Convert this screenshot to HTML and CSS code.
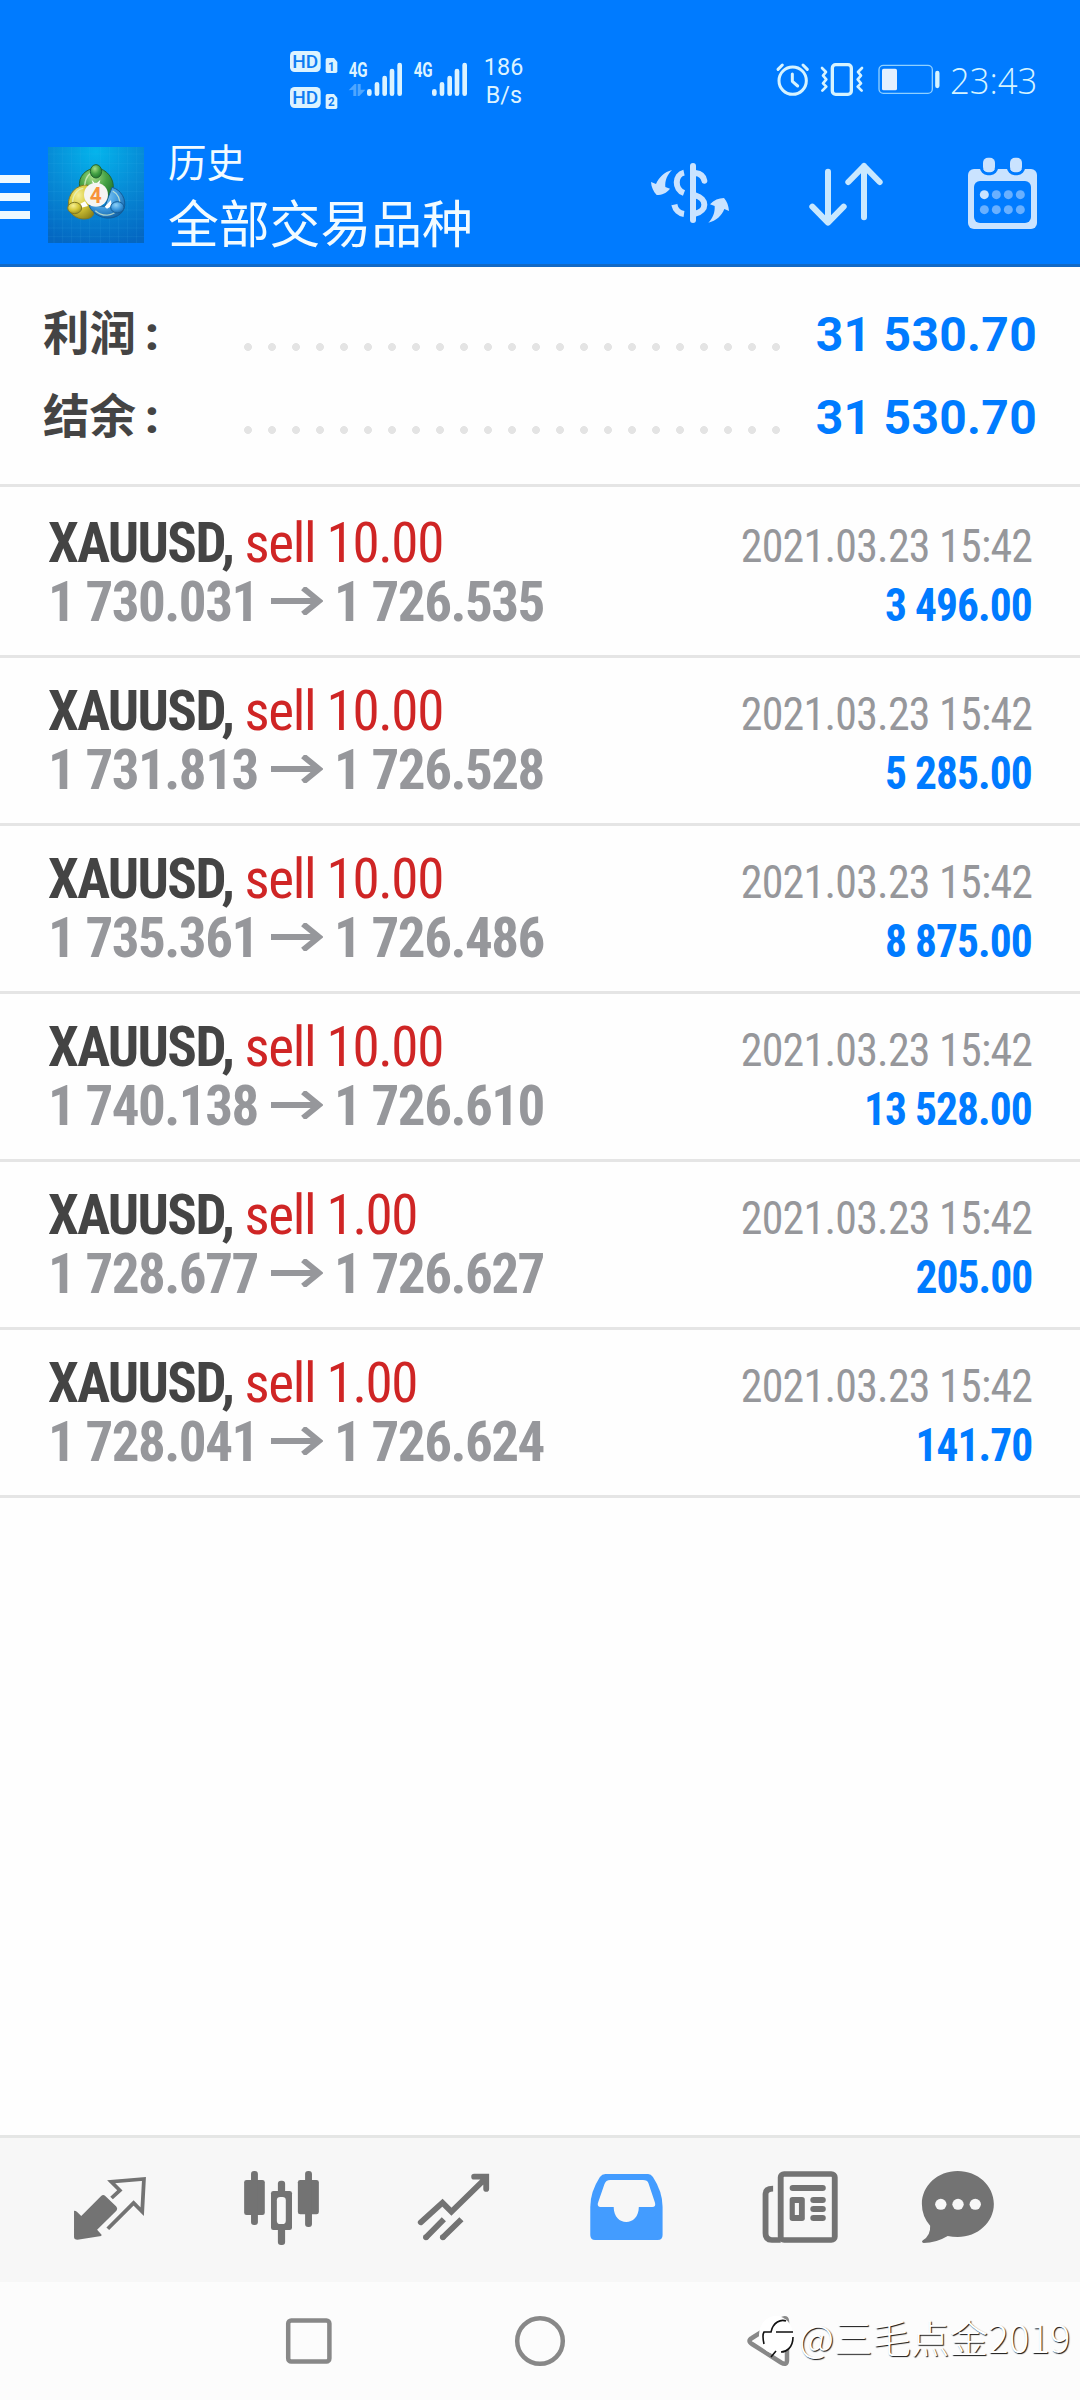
FILE: index.html
```html
<!DOCTYPE html>
<html lang="zh-CN">
<head>
<meta charset="utf-8">
<title>历史</title>
<link rel="stylesheet" href="styles.css">
</head>
<body>
<div class="screen">
  <header class="header">
    <div class="status">
      <svg class="status-left" viewBox="0 0 840 300">
        <g fill="#dcf3ff">
          <rect x="60" y="63" width="92" height="63" rx="14"/>
          <rect x="60" y="171" width="92" height="63" rx="14"/>
          <path d="M172 84h20l10 12v28q0 5-5 5h-25q-5 0-5-5v-35q0-5 5-5z"/>
          <path d="M172 192h20l10 12v28q0 5-5 5h-25q-5 0-5-5v-35q0-5 5-5z"/>
        </g>
        <g fill="#0d7cf2" class="hd-text">
          <text x="67" y="115" font-size="56" textLength="78" lengthAdjust="spacingAndGlyphs">HD</text>
          <text x="67" y="223" font-size="56" textLength="78" lengthAdjust="spacingAndGlyphs">HD</text>
          <text x="174" y="122" font-size="40" textLength="20" lengthAdjust="spacingAndGlyphs" font-weight="bold">1</text>
          <text x="174" y="229" font-size="38" textLength="20" lengthAdjust="spacingAndGlyphs" font-weight="bold">2</text>
        </g>
        <g fill="#dcf3ff" class="net-text">
          <text x="236" y="142" font-size="58" textLength="57" lengthAdjust="spacingAndGlyphs">4G</text>
          <text x="431" y="142" font-size="58" textLength="57" lengthAdjust="spacingAndGlyphs">4G</text>
        </g>
        <path fill="#4ea6ff" d="M236 181l18-19h5v36h-9v-19zM263 162h9v17h14l-18 19h-5z"/>
        <g stroke="#dcf3ff" stroke-width="14" stroke-linecap="round">
          <path d="M298 184v7M321 163v28M344 144v47M366 123v68M389 105v86M493 184v7M516 163v28M539 144v47M561 123v68M584 105v86"/>
        </g>
        <g fill="#dcf3ff" class="speed-text">
          <text x="641" y="135" textLength="119">186</text>
          <text x="647" y="219" textLength="109">B/s</text>
        </g>
      </svg>
      <svg class="status-right" viewBox="0 0 960 240">
        <g fill="none" stroke="#d6f3ff" stroke-linecap="round" stroke-linejoin="round">
          <circle cx="98" cy="122" r="41" stroke-width="9"/>
          <path d="M97 102v22l16 14M54 88l13-13M129 75l13 13" stroke-width="9"/>
          <rect x="217" y="74" width="57" height="89" rx="10" stroke-width="10"/>
          <path d="M186 84l12 12-9 11 10 11-10 12 10 10-12 12M306 84l-12 12 9 11-10 11 10 12-10 10 12 12" stroke-width="8"/>
          <rect x="357" y="76" width="160" height="84" rx="13" stroke-width="4" stroke="#8fd0ff"/>
          <path d="M532 99v39" stroke-width="13"/>
        </g>
        <rect x="366" y="86" width="45" height="65" rx="5" fill="#e4f0ff"/>
        <text class="clock" x="570" y="162" textLength="262" lengthAdjust="spacingAndGlyphs">23:43</text>
      </svg>
    </div>
    <div class="toolbar">
      <div class="menu"><i></i><i></i><i></i></div>
      <svg class="logo" viewBox="24 21 288 288">
        <defs>
          <radialGradient id="bg" cx=".5" cy=".05" r="1"><stop offset="0" stop-color="#04b4ec"/><stop offset=".5" stop-color="#078bd6"/><stop offset="1" stop-color="#0467c2"/></radialGradient>
          <radialGradient id="gr" cx=".4" cy=".3" r=".8"><stop offset="0" stop-color="#a5dc85"/><stop offset=".5" stop-color="#45a245"/><stop offset="1" stop-color="#176b28"/></radialGradient>
          <radialGradient id="ye" cx=".4" cy=".3" r=".8"><stop offset="0" stop-color="#f5ef94"/><stop offset=".5" stop-color="#d6c737"/><stop offset="1" stop-color="#8a8119"/></radialGradient>
          <radialGradient id="bl" cx=".4" cy=".3" r=".8"><stop offset="0" stop-color="#8fd2f8"/><stop offset=".5" stop-color="#3f9ade"/><stop offset="1" stop-color="#0b5a9f"/></radialGradient>
        </defs>
        <path fill="url(#bg)" d="M24 21h288v288H24z"/>
        <path d="M42 21v288M68 21v288M95 21v288M122 21v288M149 21v288M181 21v288M208 21v288M235 21v288M262 21v288M289 21v288M24 42h288M24 70h288M24 98h288M24 126h288M24 154h288M24 182h288M24 210h288M24 237h288M24 264h288M24 290h288" stroke="#4cb8f0" stroke-opacity=".18" stroke-width="2"/>
        <path fill="url(#gr)" stroke="#24652f" stroke-width="3" d="M119 142C113 108 139 86 168 84c32 2 57 33 51 65-3 15-12 27-20 30l-36-40z"/>
        <path fill="url(#ye)" stroke="#817a26" stroke-width="3" d="M143 135c-34-2-60 27-58 62 1 28 34 48 64 37 22-8 8-35 8-35z"/>
        <path fill="url(#bl)" stroke="#135d98" stroke-width="3" d="M216 142c28 7 45 38 36 64-10 26-45 35-72 23-18-8-30-23-33-33l48 3z"/>
        <path d="M134 136c2-27 17-38 28-40M98 190c-1-24 14-43 32-45M166 212c23 21 52 15 64 0M218 153c16 8 24 26 20 42" fill="none" stroke="#e4f6d0" stroke-opacity=".7" stroke-width="4"/>
        <path d="M155 119l12 14 14-14-4 16h-17zM121 191l14-7 9 14-20 5zM194 200l19-20 2 18-14 8z" fill="#fff"/>
        <ellipse cx="168" cy="94" rx="17" ry="20" fill="url(#gr)" stroke="#24652f" stroke-width="3"/>
        <ellipse cx="104" cy="204" rx="21" ry="17" fill="url(#ye)" stroke="#817a26" stroke-width="3"/>
        <ellipse cx="232" cy="202" rx="20" ry="17" fill="url(#bl)" stroke="#135d98" stroke-width="3"/>
        <circle cx="168" cy="164" r="36" fill="#f5f5f3"/>
        <text x="149" y="188" class="logo-number" textLength="36" lengthAdjust="spacingAndGlyphs">4</text>
      </svg>
      <div class="titles">
        <div class="title">历史</div>
        <div class="subtitle">全部交易品种</div>
      </div>
      <svg class="actions" viewBox="0 0 1380 390">
        <g fill="none" stroke="#cae3ff" stroke-width="18" stroke-linecap="round">
          <path d="M219 108v162"/>
          <path d="M192 128c-28 6-30 50 0 61M163 224c3 16 15 26 29 28" stroke-linecap="butt"/>
          <circle cx="163" cy="224" r=".1"/>
          <path d="M226 129c16 2 25 10 27 23M226 196c36 10 36 46 0 55"/>
        </g>
        <g fill="#cae3ff">
          <path d="M156 120c-14 14-22 32-20 51l14 5c-10 13-24 19-40 19-10-10-16-24-17-39l15 6c9-20 25-36 48-42z"/>
          <path d="M265 278c14-14 20-30 19-50l-14-5c12-13 26-19 42-19 9 10 14 24 15 39l-14-6c-8 20-24 36-48 41z"/>
        </g>
        <g fill="none" stroke="#c8e8ff" stroke-width="18" stroke-linecap="round" stroke-linejoin="round">
          <path d="M624 125v152M577 230l47 48 47-48M732 262V108M685 156l47-48 47 48"/>
        </g>
        <rect x="1044" y="117" width="207" height="180" rx="18" fill="#cae3ff"/>
        <rect x="1062" y="153" width="171" height="126" rx="18" fill="#007bff"/>
        <g fill="#cae3ff" stroke="#007bff" stroke-width="9">
          <rect x="1084" y="78" width="46" height="53" rx="19"/><rect x="1165" y="78" width="46" height="53" rx="19"/>
        </g>
        <path d="M1080 74h54v43h-54zM1161 74h54v43h-54z" fill="#007bff"/>
        <rect x="1089" y="83" width="36" height="43" rx="15" fill="#cae3ff"/><rect x="1170" y="83" width="36" height="43" rx="15" fill="#cae3ff"/>
        <g fill="#69b0ff"><circle cx="1093" cy="194" r="13.5" fill="#cae3ff"/><circle cx="1129" cy="194" r="13.5"/><circle cx="1165" cy="194" r="13.5"/><circle cx="1201" cy="194" r="13.5"/><circle cx="1093" cy="239" r="13.5"/><circle cx="1129" cy="239" r="13.5"/><circle cx="1165" cy="239" r="13.5"/><circle cx="1201" cy="239" r="13.5"/></g>
      </svg>
    </div>
  </header>

  <section class="summary">
    <div class="sum-row"><span class="sum-label">利润<b>:</b></span><span class="dots"></span><span class="sum-value">31 530.70</span></div>
    <div class="sum-row"><span class="sum-label">结余<b>:</b></span><span class="dots"></span><span class="sum-value">31 530.70</span></div>
  </section>

  <main class="deals">
    <article class="deal">
      <div class="line"><span class="order"><b>XAUUSD,</b> sell 10.00</span><span class="date">2021.03.23 15:42</span></div>
      <div class="line"><span class="price">1 730.031 <svg class="arrow" viewBox="0 0 52 28"><path d="M0 14h48M32 1l16 13-16 13"/></svg> 1 726.535</span><span class="profit">3 496.00</span></div>
    </article>
    <article class="deal">
      <div class="line"><span class="order"><b>XAUUSD,</b> sell 10.00</span><span class="date">2021.03.23 15:42</span></div>
      <div class="line"><span class="price">1 731.813 <svg class="arrow" viewBox="0 0 52 28"><path d="M0 14h48M32 1l16 13-16 13"/></svg> 1 726.528</span><span class="profit">5 285.00</span></div>
    </article>
    <article class="deal">
      <div class="line"><span class="order"><b>XAUUSD,</b> sell 10.00</span><span class="date">2021.03.23 15:42</span></div>
      <div class="line"><span class="price">1 735.361 <svg class="arrow" viewBox="0 0 52 28"><path d="M0 14h48M32 1l16 13-16 13"/></svg> 1 726.486</span><span class="profit">8 875.00</span></div>
    </article>
    <article class="deal">
      <div class="line"><span class="order"><b>XAUUSD,</b> sell 10.00</span><span class="date">2021.03.23 15:42</span></div>
      <div class="line"><span class="price">1 740.138 <svg class="arrow" viewBox="0 0 52 28"><path d="M0 14h48M32 1l16 13-16 13"/></svg> 1 726.610</span><span class="profit">13 528.00</span></div>
    </article>
    <article class="deal">
      <div class="line"><span class="order"><b>XAUUSD,</b> sell 1.00</span><span class="date">2021.03.23 15:42</span></div>
      <div class="line"><span class="price">1 728.677 <svg class="arrow" viewBox="0 0 52 28"><path d="M0 14h48M32 1l16 13-16 13"/></svg> 1 726.627</span><span class="profit">205.00</span></div>
    </article>
    <article class="deal">
      <div class="line"><span class="order"><b>XAUUSD,</b> sell 1.00</span><span class="date">2021.03.23 15:42</span></div>
      <div class="line"><span class="price">1 728.041 <svg class="arrow" viewBox="0 0 52 28"><path d="M0 14h48M32 1l16 13-16 13"/></svg> 1 726.624</span><span class="profit">141.70</span></div>
    </article>
  </main>

  <nav class="tabs">
    <svg class="tab" viewBox="69.7 54 499.5 432" preserveAspectRatio="none">
      <path fill="#737373" d="M215 272q6 0 9 4l12 12 57-59q6-7 12-2l32 32q6 7 1 13l-56 57 13 15-1 4-69 11q-10 0-10-8z"/>
      <path fill="none" stroke="#737373" stroke-width="11" d="M324 234l24-23-25-26 95-8-5 98-25-26-75 77"/>
    </svg>
    <svg class="tab" viewBox="569.2 54 499.5 432" preserveAspectRatio="none">
      <g fill="#737373"><rect x="709" y="180" width="60" height="105" rx="7"/><rect x="865" y="180" width="61" height="103" rx="7"/>
      <rect x="729" y="153" width="20" height="162" rx="9"/><rect x="886" y="153" width="20" height="168" rx="9"/><rect x="807" y="182" width="21" height="193" rx="9"/>
      <rect x="787" y="213" width="61" height="117" rx="7"/></g><rect x="804" y="231" width="26" height="81" rx="10" fill="#f7f7f7"/>
    </svg>
    <svg class="tab" viewBox="1068.7 54 499.5 432" preserveAspectRatio="none">
      <g fill="none" stroke="#737373" stroke-width="17"><path stroke-linecap="round" d="M1222 307l63-59 26 27 98-99M1377 170h35v37"/>
      <path d="M1236 353l53-55M1285 353l55-55"/></g>
      <circle cx="1237" cy="352" r="8.5" fill="#737373"/><circle cx="1286" cy="352" r="8.5" fill="#737373"/>
      <path fill="#737373" d="M1385 162h27q8 0 8 8v27z"/>
    </svg>
    <svg class="tab" viewBox="0 54 499.5 432" preserveAspectRatio="none">
      <path fill="#439cff" d="M190 162h124q8 0 14 9 28 44 28 90v84q0 15-14 15H160q-14 0-14-15v-84q0-46 28-90 6-9 16-9z"/>
      <path fill="#f7f7f7" d="M204 180h95q13 0 16 10l19 58q3 13-8 13h-39c0 60-73 60-73 0h-38q-10 0-8-11l19-57q4-13 17-13z"/>
    </svg>
    <svg class="tab" viewBox="499.5 54 499.5 432" preserveAspectRatio="none">
      <g fill="none" stroke="#737373" stroke-width="17"><rect x="699" y="162" width="157" height="198" rx="10"/><path d="M677 206q-22 0-22 16v118q0 20 18 20h26"/></g>
      <g fill="#737373"><rect x="725" y="195" width="105" height="18" rx="9"/><rect x="725" y="231" width="44" height="72" rx="8"/><rect x="785" y="231" width="45" height="18" rx="9"/><rect x="785" y="258" width="45" height="18" rx="9"/><rect x="785" y="285" width="45" height="18" rx="9"/></g>
      <path fill="#f7f7f7" d="M740 249h12v36h-12z"/>
    </svg>
    <svg class="tab" viewBox="999 54 499.5 432" preserveAspectRatio="none">
      <path fill="#737373" d="M1213 153c58 0 105 44 105 99s-47 99-105 99q-15 0-29-3-34 21-70 21-8-3-2-8 23-16 21-44-24-28-24-65c0-55 46-99 104-99z"/>
      <g fill="#f7f7f7"><circle cx="1164" cy="253" r="16.5"/><circle cx="1214" cy="253" r="16.5"/><circle cx="1264" cy="253" r="16.5"/></g>
    </svg>
  </nav>

  <footer class="sysnav">
    <svg viewBox="0 0 54 54"><rect x="3.200" y="6.500" width="41.200" height="41" rx="3"/></svg>
    <svg viewBox="0 0 54 54"><circle cx="27" cy="27" r="22.800"/></svg>
    <svg viewBox="0 0 54 54"><path d="M11 24L40 5.500q6-3.500 6 2.500v38q0 6-6 2.500L11 30q-5-3 0-6z"/></svg>
    <div class="watermark">
      <svg viewBox="0 0 36 48"><ellipse cx="17" cy="23" rx="17" ry="19" fill="#fff"/><path d="M5 32Q3 23 5 20h7C14 10 22 7 27 9M17 20h17M34 25C34 36 27 40 22 40M12 45l5-6" fill="none" stroke="#111" stroke-width="1.600"/></svg>
      <span>@三毛点金2019</span>
    </div>
  </footer>
</div>
</body>
</html>
```
FILE: styles.css
```css
* { box-sizing: border-box; }
body { margin: 0; background: #fff; font-family: Roboto, "Noto Sans CJK SC", sans-serif; }
svg { display: block; flex: none; }
.screen { width: 1080px; height: 2400px; display: flex; flex-direction: column; background: #fefefe; overflow: hidden; }

.header { height: 267px; flex: none; background: #007bff; border-bottom: 3px solid #1269c5; }
.status { height: 130px; padding: 30px 0 0 270px; display: flex; }
.status-left { width: 280px; height: 100px; }
.status-right { width: 320px; height: 80px; margin: 10px 0 0 210px; }
.hd-text, .net-text { font-family: Roboto, sans-serif; font-weight: 500; }
.net-text { font-weight: 700; }
.speed-text { font-family: Roboto, sans-serif; font-size: 70px; }
.clock { font-family: "Open Sans", sans-serif; font-weight: 300; font-size: 108px; fill: #d6f3ff; }

.toolbar { height: 134px; display: flex; align-items: flex-start; }
.menu { width: 30px; margin-top: 45px; display: flex; flex-direction: column; gap: 10px; }
.menu i { height: 8px; background: #eef9ff; }
.logo { width: 96px; height: 96px; margin: 17px 0 0 18px; }
.logo-number { font-family: Roboto, sans-serif; font-weight: 700; font-size: 66px; fill: #f7923a; }
.titles { width: 451px; margin-left: 24px; padding-top: 5px; color: #f2fbff; }
.title { font-size: 38.500px; line-height: 57px; }
.subtitle { font-size: 50.800px; line-height: 67px; }
.actions { width: 460px; height: 130px; margin-left: 1px; }

.summary { height: 220px; flex: none; padding: 26px 43px 0 43px; border-bottom: 3px solid #e5e5e5; }
.sum-row { height: 83px; display: flex; align-items: center; }
.sum-label { width: 193px; font-size: 46.500px; font-weight: 700; color: #444; line-height: 83px; }
.sum-label b { margin-left: 9px; }
.dots { width: 552px; height: 24px; margin-top: 24px; background: radial-gradient(circle, #e4e4e4 3.600px, transparent 4.300px) 0 0 / 24px 24px; }
.sum-value { margin-left: auto; font-size: 48px; font-weight: 700; letter-spacing: .3px; color: #007bff; line-height: 83px; white-space: nowrap; }

.deals { flex: 1; }
.deal { height: 168px; padding: 24px 48px 0; border-bottom: 3px solid #e5e5e5; font-family: "Roboto Condensed", Roboto, sans-serif; font-stretch: 75%; }
.deal:first-child { height: 171px; padding-top: 27px; }
.line { height: 59px; display: flex; justify-content: space-between; align-items: baseline; line-height: 59px; white-space: nowrap; }
.order { font-size: 55px; letter-spacing: -1.350px; color: #cf2525; }
.order b { color: #444; letter-spacing: -1.650px; }
.price { font-size: 55px; font-weight: 700; letter-spacing: -1.500px; color: #96979b; }
.arrow { display: inline-block; width: 52px; height: 28px; margin-left: 2px; vertical-align: 6px; fill: none; stroke: #96979b; stroke-width: 6px; }
.date { font-size: 46px; letter-spacing: -.800px; color: #96979b; transform: scaleX(.955); transform-origin: right; }
.profit { font-size: 45.500px; font-weight: 700; letter-spacing: -1px; color: #007bff; transform: scaleX(.955); transform-origin: right; }

.tabs { height: 147px; flex: none; display: grid; grid-template-columns: repeat(6, 172px); padding: 0 24px; border-top: 3px solid #e5e6e5; background: #f7f7f7; }
.tab { width: 172px; height: 144px; }

.sysnav { position: relative; height: 118px; flex: none; display: flex; align-items: center; justify-content: space-between; padding: 0 285px; background: #fcfcfc; }
.sysnav > svg { height: 54px; width: 54px; fill: none; stroke: #888; stroke-width: 4.500px; }
.watermark { position: absolute; left: 759px; top: 25px; display: flex; align-items: center; }
.watermark svg { width: 36px; height: 52px; }
.watermark span { margin-left: 4px; font: 300 38.500px/58px "Noto Sans CJK SC", sans-serif; color: #fff; text-shadow: 1px 1px 1px #111; white-space: nowrap; }
```
